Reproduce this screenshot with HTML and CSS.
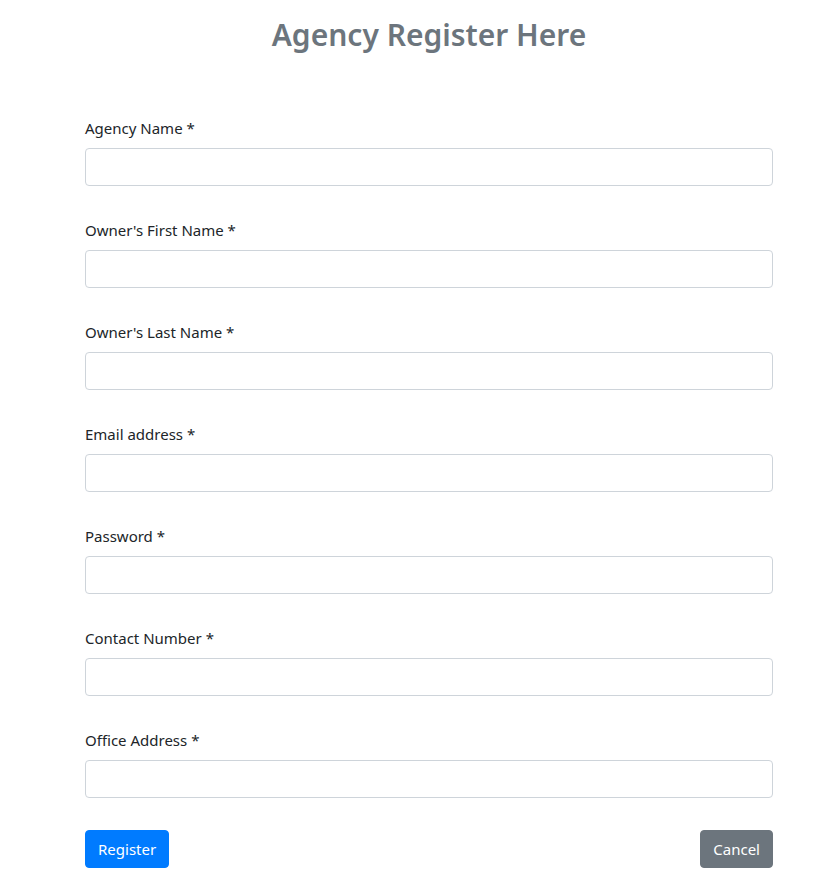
FILE: index.html
```html
<!DOCTYPE html>
<html lang="en">
<head>
<meta charset="utf-8">
<title>Agency Register</title>
<link rel="stylesheet" href="styles.css">
</head>
<body>
<div class="page">
  <h2 class="title">Agency Register Here</h2>
  <form class="form">
    <div class="group">
      <label class="label">Agency Name *</label>
      <input class="input" type="text">
    </div>
    <div class="group">
      <label class="label">Owner's First Name *</label>
      <input class="input" type="text">
    </div>
    <div class="group">
      <label class="label">Owner's Last Name *</label>
      <input class="input" type="text">
    </div>
    <div class="group">
      <label class="label">Email address *</label>
      <input class="input" type="email">
    </div>
    <div class="group">
      <label class="label">Password *</label>
      <input class="input" type="password">
    </div>
    <div class="group">
      <label class="label">Contact Number *</label>
      <input class="input" type="text">
    </div>
    <div class="group">
      <label class="label">Office Address *</label>
      <input class="input" type="text">
    </div>
    <div class="actions">
      <button type="button" class="btn btn-primary">Register</button>
      <button type="button" class="btn btn-secondary">Cancel</button>
    </div>
  </form>
</div>
</body>
</html>
```

FILE: styles.css
```css
* { box-sizing: border-box; }
html, body { margin: 0; padding: 0; background: #fff; }
body {
  font-family: "Segoe UI", "Noto Sans", "Open Sans", sans-serif;
  font-size: 15px;
  line-height: 1.6;
  color: #212529;
}
.page {
  width: 688px;
  margin-left: 85px;
  padding-top: 16px;
}
.title {
  margin: 0;
  text-align: center;
  font-size: 30px;
  font-weight: 600;
  line-height: 38px;
  color: #6c757d;
}
.form {
  margin-top: 62px;
  display: flex;
  flex-direction: column;
  gap: 32px;
}
.group { display: flex; flex-direction: column; }
.label {
  display: block;
  margin-bottom: 8px;
  line-height: 24px;
}
.input {
  display: block;
  width: 100%;
  height: 38px;
  padding: 6px 12px;
  font: inherit;
  color: #495057;
  background: #fff;
  border: 1px solid #ced4da;
  border-radius: 4px;
  outline: none;
}
.actions {
  display: flex;
  justify-content: space-between;
}
.btn {
  height: 38px;
  padding: 6px 12px;
  font: inherit;
  line-height: 24px;
  color: #fff;
  border: 1px solid transparent;
  border-radius: 4px;
}
.btn-primary { background: #007bff; border-color: #007bff; }
.btn-secondary { background: #6c757d; border-color: #6c757d; }
```
